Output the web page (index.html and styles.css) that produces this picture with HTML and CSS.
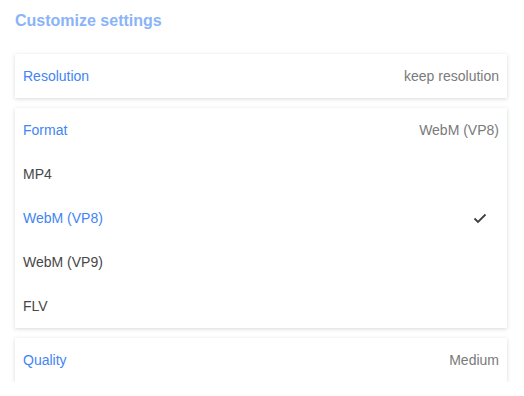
FILE: index.html
```html
<!DOCTYPE html>
<html>
<head>
<meta charset="utf-8">
<link rel="stylesheet" href="styles.css">
</head>
<body>
<div class="page">
  <h1 class="title">Customize settings</h1>
  <div class="card">
    <div class="row">
      <span class="label">Resolution</span>
      <span class="value">keep resolution</span>
    </div>
  </div>
  <div class="card">
    <div class="row">
      <span class="label">Format</span>
      <span class="value">WebM (VP8)</span>
    </div>
    <div class="row option"><span>MP4</span></div>
    <div class="row option selected">
      <span>WebM (VP8)</span>
      <svg class="check" width="14" height="11" viewBox="0 0 14 11"><path d="M1.5 5.5 L5 9 L12.5 1.5" fill="none" stroke="#3c4043" stroke-width="1.8"/></svg>
    </div>
    <div class="row option"><span>WebM (VP9)</span></div>
    <div class="row option"><span>FLV</span></div>
  </div>
  <div class="card">
    <div class="row">
      <span class="label">Quality</span>
      <span class="value">Medium</span>
    </div>
  </div>
</div>
</body>
</html>
```
FILE: styles.css
```css
html, body {
  margin: 0;
  padding: 0;
  background: #ffffff;
}
body {
  font-family: "Liberation Sans", Arial, sans-serif;
  font-size: 14px;
}
.page {
  padding: 12px 17px 0 15px;
  display: flex;
  flex-direction: column;
  gap: 10px;
}
.title {
  margin: 0 0 14px 0;
  font-size: 16px;
  font-weight: bold;
  color: #8ab4f8;
  line-height: 18px;
}
.card {
  background: #fff;
  box-shadow: 0 1px 4px rgba(60, 64, 67, 0.2);
  display: flex;
  flex-direction: column;
}
.row {
  height: 44px;
  display: flex;
  align-items: center;
  justify-content: space-between;
  padding: 0 8px 0 8px;
}
.label {
  color: #4285f4;
}
.value {
  color: #7a7a7a;
}
.option {
  color: #474747;
}
.option.selected {
  color: #4285f4;
}
.check {
  margin-right: 12px;
}
```
